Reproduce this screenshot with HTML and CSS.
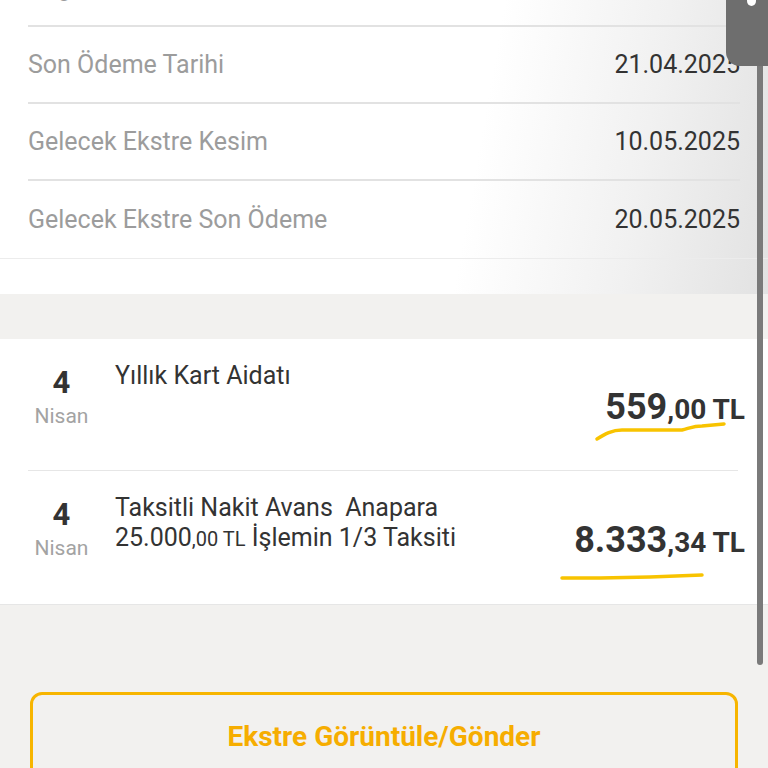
FILE: index.html
```html
<!DOCTYPE html>
<html lang="tr">
<head>
    <meta charset="UTF-8">
    <title>Ekstre Detayı</title>
    <link rel="stylesheet" href="styles.css">
</head>
<body>
<div class="page">
    <div class="summary">
        <div class="summary-list">
            <div class="row">
                <div class="label">Asgari Ödeme Tutarı</div>
                <div class="value">2.964,50 TL</div>
            </div>
            <div class="row">
                <div class="label">Son Ödeme Tarihi</div>
                <div class="value">21.04.2025</div>
            </div>
            <div class="row">
                <div class="label">Gelecek Ekstre Kesim</div>
                <div class="value">10.05.2025</div>
            </div>
            <div class="row">
                <div class="label">Gelecek Ekstre Son Ödeme</div>
                <div class="value">20.05.2025</div>
            </div>
        </div>
        <div class="summary-foot"></div>
    </div>

    <div class="transactions">
        <div class="item">
            <div class="date">
                <div class="day">4</div>
                <div class="month">Nisan</div>
            </div>
            <div class="desc">
                <div class="title">Yıllık Kart Aidatı</div>
            </div>
            <div class="amount"><span class="int">559</span><span class="dec">,00 TL</span></div>
        </div>
        <div class="item">
            <div class="date">
                <div class="day">4</div>
                <div class="month">Nisan</div>
            </div>
            <div class="desc">
                <div class="title">Taksitli Nakit Avans&nbsp; Anapara</div>
                <div class="title">25.000<span class="small">,00 TL</span> İşlemin 1/3 Taksiti</div>
            </div>
            <div class="amount"><span class="int">8.333</span><span class="dec">,34 TL</span></div>
        </div>
    </div>

    <div class="actions">
        <div class="btn">Ekstre Görüntüle/Gönder</div>
    </div>
</div>

<!-- elle çizilmiş sarı alt çizgiler -->
<svg class="marks" viewBox="0 0 768 768" width="768" height="768">
    <path d="M597 439 C605 434 612 430 622 430 L682 430 C690 428 694 426 702 426 L724 424" />
    <path d="M562 578 L600 578 L650 577 L702 575" />
</svg>

<!-- hızlı kaydırma çubuğu -->
<div class="scroll-track"></div>
<div class="scroll-thumb"><span class="grip"></span></div>
</body>
</html>
```

FILE: styles.css
```css
* {
    box-sizing: border-box;
}

body {
    margin: 0;
    background: #f2f1ef;
    font-family: Roboto, "Noto Sans", sans-serif;
    overflow: hidden;
}

.page {
    width: 768px;
    height: 768px;
    overflow: hidden;
}

.summary {
    margin-top: -50px;
    background: linear-gradient(100deg, #ffffff 62%, #f1f1f1 82%, #e2e2e2 100%);
}

.summary-list {
    border-bottom: 1px solid #ececec;
}

.summary .row {
    height: 77px;
    margin: 0 28px;
    display: flex;
    align-items: center;
    justify-content: space-between;
    border-bottom: 2px solid #e2e2e2;
    font-size: 25px;
}

.summary .row:last-child {
    border-bottom: none;
}

.summary .label {
    color: #9c9c9c;
}

.summary .value {
    color: #333;
}

.summary-foot {
    height: 35px;
}

.transactions {
    margin-top: 45px;
    background: #fff;
    border-bottom: 1px solid #e6e6e6;
}

.item {
    display: flex;
    margin: 0 30px 0 28px;
    height: 132px;
    border-bottom: 1px solid #e6e6e6;
}

.item:last-child {
    border-bottom: none;
    height: 133px;
}

.item .date {
    width: 67px;
    padding-top: 26px;
    text-align: center;
}

.item .day {
    font-size: 31px;
    font-weight: bold;
    line-height: 36px;
    color: #333;
}

.item .month {
    font-size: 21px;
    line-height: 30px;
    color: #a3a3a3;
}

.item .desc {
    flex: 1;
    padding-top: 22px;
    padding-left: 20px;
}

.item .title {
    font-size: 25px;
    line-height: 30px;
    color: #333;
}

.item .title .small {
    font-size: 20px;
}

.item .amount {
    align-self: center;
    margin-right: -7px;
    padding-top: 4px;
    font-weight: bold;
    color: #333;
    white-space: nowrap;
}

.item .amount .int {
    font-size: 36px;
}

.item .amount .dec {
    font-size: 28px;
}

.actions {
    padding: 87px 30px 0;
}

.btn {
    height: 96px;
    border: 3px solid #f7b500;
    border-radius: 12px;
    padding-top: 25px;
    text-align: center;
    font-size: 28px;
    font-weight: bold;
    color: #f6ad00;
}

.marks {
    position: absolute;
    left: 0;
    top: 0;
    pointer-events: none;
}

.marks path {
    fill: none;
    stroke: #f8c300;
    stroke-width: 3.5;
    stroke-linecap: round;
    stroke-linejoin: round;
}

.scroll-track {
    position: absolute;
    left: 757px;
    top: 0;
    width: 6px;
    height: 665px;
    background: #7a7a7a;
    border-radius: 0 0 3px 3px;
}

.scroll-thumb {
    position: absolute;
    left: 726px;
    top: 0;
    width: 42px;
    height: 66px;
    background: #6e6e6e;
    border-bottom-left-radius: 14px;
}

.scroll-thumb .grip {
    position: absolute;
    left: 21px;
    top: -4px;
    width: 9px;
    height: 10px;
    background: #fff;
    border-radius: 50%;
}
```
